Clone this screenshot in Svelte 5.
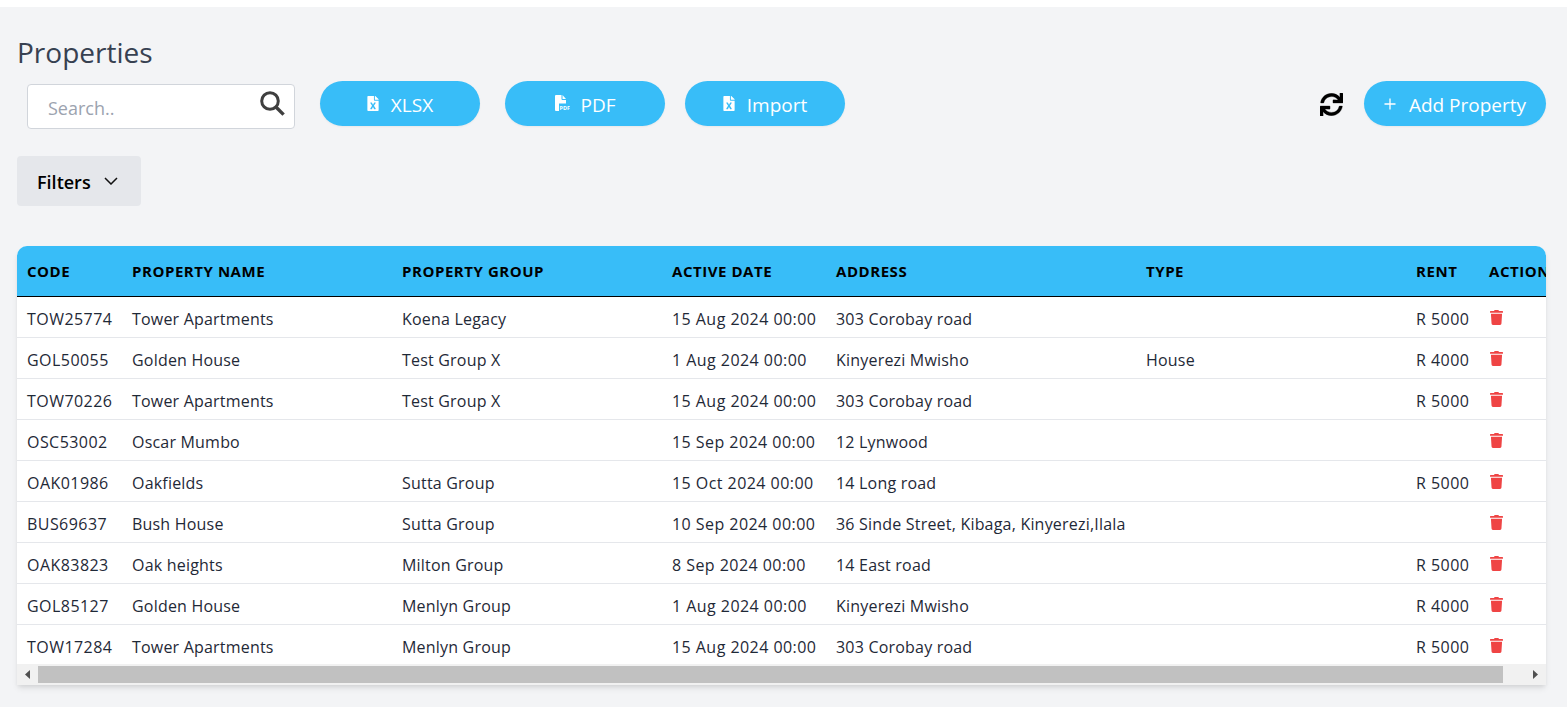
<script>
  const rows = [
    ['TOW25774', 'Tower Apartments', 'Koena Legacy', '15 Aug 2024 00:00', '303 Corobay road', '', 'R 5000'],
    ['GOL50055', 'Golden House', 'Test Group X', '1 Aug 2024 00:00', 'Kinyerezi Mwisho', 'House', 'R 4000'],
    ['TOW70226', 'Tower Apartments', 'Test Group X', '15 Aug 2024 00:00', '303 Corobay road', '', 'R 5000'],
    ['OSC53002', 'Oscar Mumbo', '', '15 Sep 2024 00:00', '12 Lynwood', '', ''],
    ['OAK01986', 'Oakfields', 'Sutta Group', '15 Oct 2024 00:00', '14 Long road', '', 'R 5000'],
    ['BUS69637', 'Bush House', 'Sutta Group', '10 Sep 2024 00:00', '36 Sinde Street, Kibaga, Kinyerezi,Ilala', '', ''],
    ['OAK83823', 'Oak heights', 'Milton Group', '8 Sep 2024 00:00', '14 East road', '', 'R 5000'],
    ['GOL85127', 'Golden House', 'Menlyn Group', '1 Aug 2024 00:00', 'Kinyerezi Mwisho', '', 'R 4000'],
    ['TOW17284', 'Tower Apartments', 'Menlyn Group', '15 Aug 2024 00:00', '303 Corobay road', '', 'R 5000']
  ];
  const heads = ['Code', 'Property Name', 'Property Group', 'Active Date', 'Address', 'Type', 'Rent', 'Action'];
  const excel = 'M224 136V0H24C10.7 0 0 10.7 0 24v464c0 13.3 10.7 24 24 24h336c13.3 0 24-10.7 24-24V160H248c-13.2 0-24-10.8-24-24zm60.1 106.5L224 336l60.1 93.5c5.1 8-.6 18.5-10.1 18.5h-34.9c-4.4 0-8.5-2.4-10.6-6.3C208.9 405.5 192 373 192 373c-6.1 14.1-9.5 19.1-36.6 68.8-2.1 3.9-6.1 6.3-10.5 6.3H110c-9.5 0-15.2-10.5-10.1-18.5l60.3-93.5-60.3-93.5c-5.2-8 .6-18.5 10.1-18.5h34.8c4.4 0 8.5 2.4 10.6 6.3 26.1 48.8 20 33.6 36.6 68.5 0 0 6.1-11.7 36.6-68.5 2.1-3.9 6.2-6.3 10.6-6.3H274c9.5-.1 15.2 10.4 10.1 18.4zM384 121.9v6.1H256V0h6.1c6.4 0 12.5 2.5 17 7l97.9 98c4.5 4.5 7 10.6 7 16.9z';
</script>

<div class="page">
  <h1>Properties</h1>
  <div class="toolbar">
    <div class="search">
      <input placeholder="Search.." />
      <svg class="mag" viewBox="0 0 25 25" fill="none" stroke="#3f3f3f">
        <circle cx="10" cy="10" r="8.3" stroke-width="3" />
        <path d="M16.2 16.2 23.6 23.6" stroke-width="3.4" />
      </svg>
    </div>
    <button class="pill first"><svg class="fi" viewBox="0 0 384 512"><path d={excel} /></svg>XLSX</button>
    <button class="pill second">
      <svg class="fi pdf" viewBox="0 0 15 16">
        <path d="M0 1a1 1 0 0 1 1-1h5.5v4a1 1 0 0 0 1 1H11v3.5H4V16H1a1 1 0 0 1-1-1zM7.5 0 11 4H7.5z" />
        <text x="4.6" y="15" font-size="5.4" font-weight="700" font-family="'Open Sans', sans-serif">PDF</text>
      </svg>PDF
    </button>
    <button class="pill third"><svg class="fi" viewBox="0 0 384 512"><path d={excel} /></svg>Import</button>
    <span class="grow"></span>
    <svg class="sync" viewBox="0 0 512 512"><path d="M440.65 12.57l4 82.77A247.16 247.16 0 0 0 255.83 8C134.73 8 33.91 94.92 12.29 209.82A12 12 0 0 0 24.09 224h49.05a12 12 0 0 0 11.67-9.26 175.91 175.91 0 0 1 317-56.94l-101.46-4.86a12 12 0 0 0-12.57 12v47.41a12 12 0 0 0 12 12H500a12 12 0 0 0 12-12V12a12 12 0 0 0-12-12h-47.37a12 12 0 0 0-11.98 12.57zM255.83 432a175.61 175.61 0 0 1-146-77.8l101.8 4.87a12 12 0 0 0 12.57-12v-47.4a12 12 0 0 0-12-12H12a12 12 0 0 0-12 12V500a12 12 0 0 0 12 12h47.35a12 12 0 0 0 12-12.6l-4.15-82.57A247.17 247.17 0 0 0 255.83 504c121.11 0 221.93-86.92 243.55-201.82a12 12 0 0 0-11.8-14.18h-49.05a12 12 0 0 0-11.67 9.26A175.86 175.86 0 0 1 255.83 432z" /></svg>
    <button class="pill add"><svg class="plus" viewBox="0 0 12 12" fill="none" stroke="#fff" stroke-width="1.3"><path d="M6 0.5v11M0.5 6h11" /></svg>Add Property</button>
  </div>

  <button class="filters">Filters
    <svg viewBox="0 0 14 8" fill="none" stroke="#111" stroke-width="1.5"><path d="M1 1l6 6 6-6" /></svg>
  </button>

  <div class="card">
    <div class="clip">
      <table>
        <thead>
          <tr>{#each heads as h}<th>{h}</th>{/each}</tr>
        </thead>
        <tbody>
          {#each rows as r}
            <tr>
              {#each r as c}<td>{c}</td>{/each}
              <td><svg class="trash" viewBox="0 0 448 512"><path d="M432 32H312l-9.4-18.7A24 24 0 0 0 281.1 0H166.8a23.72 23.72 0 0 0-21.4 13.3L136 32H16A16 16 0 0 0 0 48v32a16 16 0 0 0 16 16h416a16 16 0 0 0 16-16V48a16 16 0 0 0-16-16zM53.2 467a48 48 0 0 0 47.9 45h245.8a48 48 0 0 0 47.9-45L416 128H32z" /></svg></td>
            </tr>
          {/each}
        </tbody>
      </table>
    </div>
    <div class="bar">
      <svg viewBox="0 0 5 9"><path d="M5 0v9L0 4.5z" /></svg>
      <span class="thumb"></span>
      <svg viewBox="0 0 5 9"><path d="M0 0v9l5-4.5z" /></svg>
    </div>
  </div>
</div>

<style>
  :global(body) { margin: 0; background: #fff; overflow: hidden; }
  .page {
    margin-top: 7px;
    height: 700px;
    box-sizing: border-box;
    padding: 25px 21px 0 17px;
    background: #f3f4f6;
    font-family: "Open Sans", "Noto Sans", sans-serif;
    color: #1f2937;
  }
  h1 {
    margin: 0;
    height: 40px;
    font-size: 28px;
    line-height: 40px;
    font-weight: 400;
    color: #374151;
  }
  .toolbar { display: flex; align-items: flex-start; margin-top: 9px; height: 48px; }
  .search {
    position: relative;
    box-sizing: border-box;
    width: 268px;
    height: 45px;
    margin: 3px 25px 0 10px;
    background: #fff;
    border: 1px solid #d1d5db;
    border-radius: 4px;
  }
  input {
    width: 100%;
    height: 100%;
    box-sizing: border-box;
    padding: 2px 45px 0 20px;
    border: 0;
    outline: 0;
    background: transparent;
    font: 400 18px "Open Sans", sans-serif;
  }
  input::placeholder { color: #9ca3af; opacity: 1; }
  .mag { position: absolute; right: 9px; top: 6px; width: 25px; height: 25px; }
  .pill {
    display: flex;
    align-items: center;
    justify-content: center;
    height: 45px;
    width: 160px;
    padding: 2px 0 0;
    border: 0;
    border-radius: 23px;
    background: #38bdf8;
    color: #fff;
    font: 400 19px "Open Sans", sans-serif;
    box-shadow: 0 1px 2px rgba(0, 0, 0, 0.05);
  }
  .first { margin-right: 25px; }
  .second { margin-right: 20px; }
  .fi { width: 12px; height: 15px; margin: -3px 12px 0 0; fill: #fff; }
  .pdf { width: 15px; height: 16px; margin-right: 10px; margin-left: 1px; }
  .grow { flex: 1; }
  .sync { width: 23px; height: 23px; margin: 12px 21px 0 0; fill: #000; stroke: #000; stroke-width: 6; }
  .add { width: 182px; }
  .plus { width: 12px; height: 12px; margin: -2px 13px 0 0; }
  .filters {
    display: flex;
    align-items: center;
    gap: 13px;
    box-sizing: border-box;
    width: 124px;
    height: 50px;
    margin-top: 27px;
    padding: 2px 0 0 20px;
    border: 0;
    border-radius: 4px;
    background: #e5e7eb;
    color: #000;
    font: 600 18px "Open Sans", sans-serif;
  }
  .filters svg { width: 14px; height: 8px; margin-top: -2px; }
  .card {
    margin-top: 40px;
    width: 1529px;
    background: #fff;
    border-radius: 10px 10px 0 0;
    box-shadow: 0 4px 6px -1px rgba(0, 0, 0, 0.1), 0 2px 4px -1px rgba(0, 0, 0, 0.06);
  }
  .clip { overflow: hidden; border-radius: 10px 10px 0 0; }
  .bar {
    display: flex;
    align-items: center;
    gap: 8px;
    box-sizing: border-box;
    height: 21px;
    padding: 0 8px;
    background: #f1f1f1;
  }
  .bar svg { width: 5px; height: 9px; flex: none; fill: #505050; }
  .thumb { flex: 1; height: 17px; margin-right: 22px; background: #c1c1c1; }
  table { border-collapse: collapse; table-layout: fixed; width: 1552px; }
  th, td { padding: 0 0 0 10px; text-align: left; white-space: nowrap; overflow: hidden; }
  th {
    height: 50px;
    background: #38bdf8;
    border-bottom: 1px solid #000;
    color: #000;
    font-size: 15px;
    font-weight: 700;
    letter-spacing: 0.55px;
    text-transform: uppercase;
  }
  td {
    height: 36px;
    padding-top: 4px;
    border-bottom: 1px solid #e5e7eb;
    font-size: 16px;
    letter-spacing: 0.2px;
    color: #1f2937;
  }
  td:nth-child(1) { letter-spacing: 0.45px; }
  td:nth-child(4) { letter-spacing: 0.45px; }
  td:nth-child(7) { letter-spacing: 0.45px; }
  tbody tr:last-child td { height: 35px; border-bottom: 0; }
  th:nth-child(1) { width: 95px; }
  th:nth-child(2), th:nth-child(3) { width: 260px; }
  th:nth-child(4) { width: 154px; }
  th:nth-child(5) { width: 300px; }
  th:nth-child(6) { width: 260px; }
  th:nth-child(7) { width: 63px; }
  .trash { display: block; width: 13px; height: 15px; margin: -3px 0 0 1px; fill: #ef4444; }
</style>
